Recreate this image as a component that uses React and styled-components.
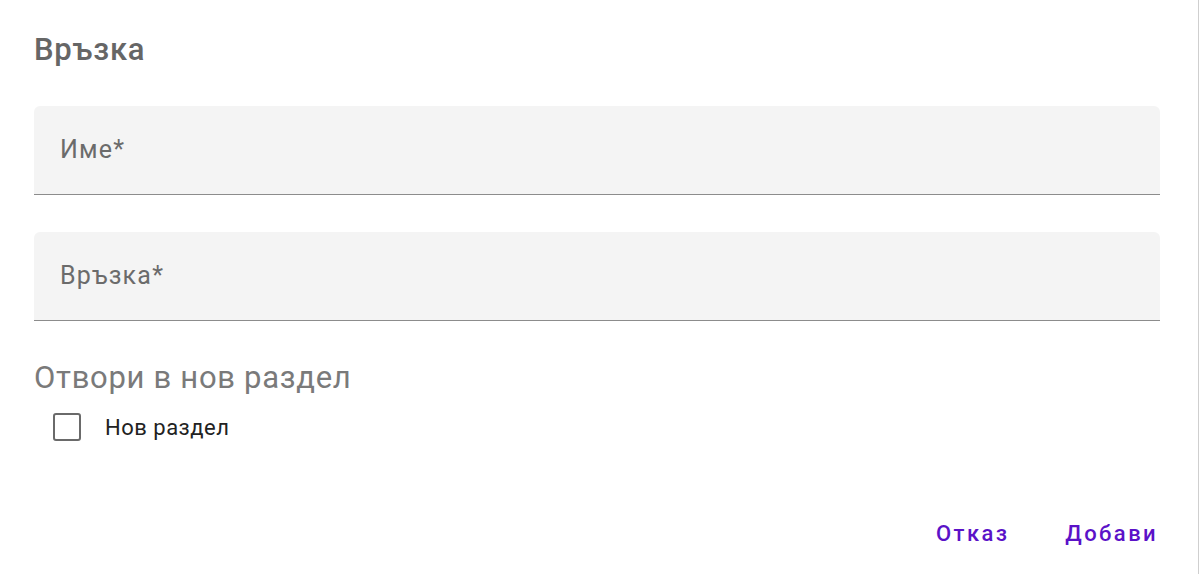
import React from "react";
import styled, { createGlobalStyle } from "styled-components";

const GlobalStyle = createGlobalStyle`
  html, body {
    margin: 0;
    padding: 0;
    background: #ffffff;
  }

  body {
    font-family: Roboto, "Noto Sans", sans-serif;
  }
`;

const Dialog = styled.div`
  box-sizing: border-box;
  width: 1199px;
  height: 574px;
  padding: 32px 38px 0 34px;
  border-right: 1px solid #cfcfcf;
  background: #fff;
  display: flex;
  flex-direction: column;
`;

const Title = styled.h2`
  margin: 0;
  font-size: 31px;
  line-height: 36px;
  font-weight: 500;
  letter-spacing: 0.8px;
  color: #666666;
`;

const Fields = styled.div`
  display: flex;
  flex-direction: column;
  gap: 37px;
  margin-top: 38px;
`;

const Field = styled.div`
  box-sizing: border-box;
  height: 89px;
  padding-left: 26px;
  display: flex;
  align-items: center;
  background: #f4f4f4;
  border-radius: 6px 6px 0 0;
  border-bottom: 1.5px solid #8c8c8c;
`;

const Label = styled.span`
  font-size: 25px;
  line-height: 28px;
  color: #6b6b6b;
  letter-spacing: 1.2px;
`;

const Section = styled.div`
  margin-top: 39px;
`;

const SectionTitle = styled.div`
  font-size: 31px;
  line-height: 36px;
  color: #7a7a7a;
  letter-spacing: 0.7px;
`;

const CheckRow = styled.label`
  display: flex;
  align-items: center;
  height: 40px;
  margin-top: 11px;
  padding-left: 19px;
  gap: 24px;
  cursor: pointer;
`;

const Box = styled.span`
  box-sizing: border-box;
  width: 28px;
  height: 28px;
  border: 2.5px solid #6a6a6a;
  border-radius: 3px;
  background: #fff;
`;

const CheckText = styled.span`
  font-size: 22px;
  color: #222;
  letter-spacing: 0.5px;
`;

const Actions = styled.div`
  display: flex;
  justify-content: flex-end;
  gap: 56px;
  margin-top: 69px;
  padding-right: 2px;
`;

const Button = styled.button`
  border: none;
  background: none;
  padding: 0;
  font-family: Roboto, "Noto Sans", sans-serif;
  font-size: 22px;
  line-height: 36px;
  font-weight: 500;
  letter-spacing: 2.4px;
  color: #5b12c8;
  cursor: pointer;
`;

export default function App() {
  return (
    <>
      <GlobalStyle />
      <Dialog>
        <Title>Връзка</Title>
        <Fields>
          <Field>
            <Label>Име*</Label>
          </Field>
          <Field>
            <Label>Връзка*</Label>
          </Field>
        </Fields>
        <Section>
          <SectionTitle>Отвори в нов раздел</SectionTitle>
          <CheckRow>
            <Box />
            <CheckText>Нов раздел</CheckText>
          </CheckRow>
        </Section>
        <Actions>
          <Button>Отказ</Button>
          <Button>Добави</Button>
        </Actions>
      </Dialog>
    </>
  );
}
